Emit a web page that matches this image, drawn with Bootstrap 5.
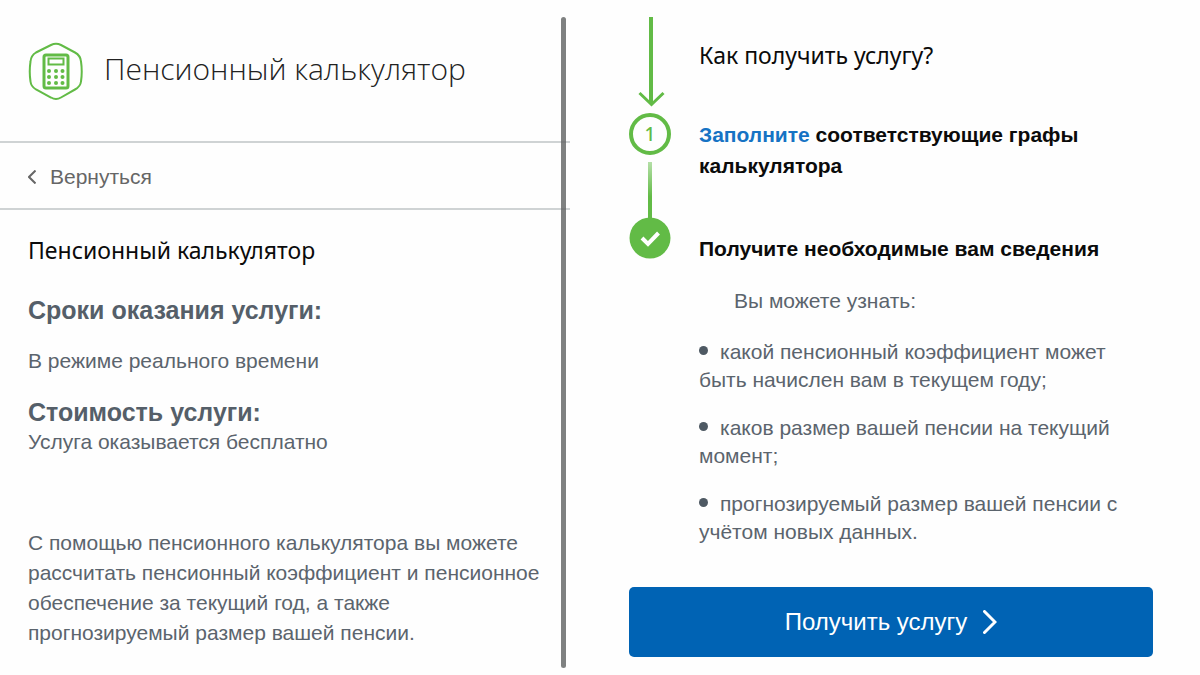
<!DOCTYPE html>
<html lang="ru">
<head>
<meta charset="utf-8">
<meta name="viewport" content="width=device-width, initial-scale=1">
<title>Пенсионный калькулятор</title>
<link href="https://cdn.jsdelivr.net/npm/bootstrap@5.3.0/dist/css/bootstrap.min.css" rel="stylesheet">
<style>
  :root { --ink: #5b646d; --line: #cfd3d4; --leaf: #62bb46; --brand: #0063b4; }
  body { font-family: "Liberation Sans", Arial, sans-serif; font-size: 21px; line-height: 28px; color: var(--ink); background: #fefefe; }
  .pane-info { flex: 0 0 47.5%; }
  .divider { position: absolute; top: 17px; bottom: 7px; right: 4px; width: 5px; border-radius: 3px; background: rgba(95, 98, 98, .8); }
  .topbar { padding: 38px 28px 37px; border-bottom: 2px solid var(--line); }
  .topbar h1 { font: 300 30px/32px "Open Sans", "Noto Sans", sans-serif; color: #222; }
  .backbar { padding: 20px 28px 17px; border-bottom: 2px solid var(--line); }
  .backbar a { color: #666; gap: 14px; }
  .details { padding: 24px 28px; }
  .section-title { font: 400 23px/32px "Noto Sans", "Open Sans", sans-serif; color: #0b0b0b; }
  .fact { font-size: 25px; line-height: 32px; font-weight: 700; color: #555f69; }
  .fact-first { margin: 28px 0 21px; }
  .fact-text { margin-bottom: 21px; }
  .about { line-height: 30px; }
  .pane-steps { padding: 17px 47px 18px 59px; }
  .rail { flex: 0 0 42px; }
  .steps { padding-top: 22px; }
  .step-title { font-size: 21px; line-height: 31px; font-weight: 700; color: #0b0b0b; margin: 0 0 23px; }
  .step-first { margin: 48px 0 52px; }
  .step-title a { color: #1673c4; }
  .know { padding-left: 35px; margin-bottom: 23px; }
  .know-list { gap: 20px; }
  .dot { display: inline-block; width: 9px; height: 9px; border-radius: 50%; background: #4e5963; vertical-align: 4px; margin-right: 12px; }
  .btn-get { margin-top: 41px; background: var(--brand); color: #fff; font-size: 24px; line-height: 32px; padding: 19px; border-radius: 5px; border: 0; }
  .btn-get:hover { background: #00559b; color: #fff; }
</style>
</head>
<body>
<div class="d-flex min-vh-100">
  <section class="pane-info position-relative">
    <header class="topbar d-flex align-items-center">
      <svg width="56" height="66" viewBox="0 0 56 66" fill="none" stroke="#62bb46" aria-hidden="true">
        <path d="M23 7Q28 4.500 33 7L47 14.500Q52.500 17.500 53 23.500Q54.500 33.500 53 43.500Q52.500 48.500 47 51.500L33 59.500Q28 62.500 23 59.500L8 51.500Q3 48.500 2.500 43.500Q1 33.500 2.500 23.500Q3 17.500 8 14.500Z" stroke-width="2"/>
        <rect x="16" y="17" width="24" height="33" rx="2" stroke-width="3"/>
        <rect x="20.500" y="20.500" width="15" height="6" stroke-width="2"/>
        <g fill="#62bb46" stroke="none">
          <circle cx="21" cy="33" r="2"/><circle cx="28" cy="33" r="2"/><circle cx="34.500" cy="33" r="2"/>
          <circle cx="21" cy="39" r="2"/><circle cx="28" cy="39" r="2"/><circle cx="34.500" cy="39" r="2"/>
          <circle cx="21" cy="45" r="2"/><circle cx="28" cy="45" r="2"/><circle cx="34.500" cy="45" r="2"/>
        </g>
      </svg>
      <h1 class="mb-0 ms-3 ps-1 pb-1">Пенсионный калькулятор</h1>
    </header>
    <nav class="backbar">
      <a href="#" class="d-inline-flex align-items-center text-decoration-none">
        <svg width="8" height="14" viewBox="0 0 8 14" fill="none" stroke="#666" stroke-width="2" aria-hidden="true"><path d="M7.500 .5L1 7l6.500 6.500"/></svg>
        Вернуться
      </a>
    </nav>
    <main class="details">
      <h2 class="section-title mb-0">Пенсионный калькулятор</h2>
      <h3 class="fact fact-first">Сроки оказания услуги:</h3>
      <p class="fact-text">В режиме реального времени</p>
      <h3 class="fact mb-0">Стоимость услуги:</h3>
      <p class="mb-5">Услуга оказывается бесплатно</p>
      <p class="about mb-0 pt-4">С помощью пенсионного калькулятора вы можете рассчитать пенсионный коэффициент и пенсионное обеспечение за текущий год, а также прогнозируемый размер вашей пенсии.</p>
    </main>
    <div class="divider"></div>
  </section>

  <section class="pane-steps flex-grow-1">
    <div class="d-flex">
      <div class="rail">
        <svg width="42" height="242" viewBox="0 0 42 242" fill="none" role="img" aria-label="Шаг 1, затем готово">
          <defs><linearGradient id="fade" x1="0" y1="0" x2="0" y2="1"><stop offset="0" stop-color="#b5dfa8"/><stop offset=".6" stop-color="#62bb46"/></linearGradient></defs>
          <path d="M10.500 76L22.500 87.500 34.500 76" stroke="#62bb46" stroke-width="3"/>
          <path d="M22 0V86" stroke="#62bb46" stroke-width="4"/>
          <circle cx="21" cy="117" r="19" stroke="#62bb46" stroke-width="4"/>
          <text x="21" y="124" text-anchor="middle" font-family="Noto Sans, sans-serif" font-size="19" font-weight="500" fill="#62bb46">1</text>
          <rect x="19" y="145" width="4" height="58" fill="url(#fade)"/>
          <circle cx="21" cy="221" r="20.500" fill="#62bb46"/>
          <path d="M13 221l6 6L29.500 216" stroke="#fff" stroke-width="4"/>
        </svg>
      </div>
      <div class="steps flex-grow-1 ms-4 ps-1">
        <h2 class="section-title mb-0">Как получить услугу?</h2>
        <h3 class="step-title step-first"><a href="#" class="text-decoration-none">Заполните</a> соответствующие графы калькулятора</h3>
        <h3 class="step-title">Получите необходимые вам сведения</h3>
        <p class="know">Вы можете узнать:</p>
        <ul class="know-list list-unstyled d-grid mb-0">
          <li><span class="dot"></span>какой пенсионный коэффициент может быть начислен вам в текущем году;</li>
          <li><span class="dot"></span>каков размер вашей пенсии на текущий момент;</li>
          <li><span class="dot"></span>прогнозируемый размер вашей пенсии с учётом новых данных.</li>
        </ul>
      </div>
    </div>
    <button type="button" class="btn btn-get w-100 d-flex align-items-center justify-content-center">
      Получить услугу
      <svg class="ms-3" width="14" height="24" viewBox="0 0 14 24" fill="none" stroke="#fff" stroke-width="3" aria-hidden="true"><path d="M1.500 1.500L12 12 1.500 22.500" stroke-linecap="round"/></svg>
    </button>
  </section>
</div>
<script src="https://cdn.jsdelivr.net/npm/bootstrap@5.3.0/dist/js/bootstrap.bundle.min.js"></script>
</body>
</html>
